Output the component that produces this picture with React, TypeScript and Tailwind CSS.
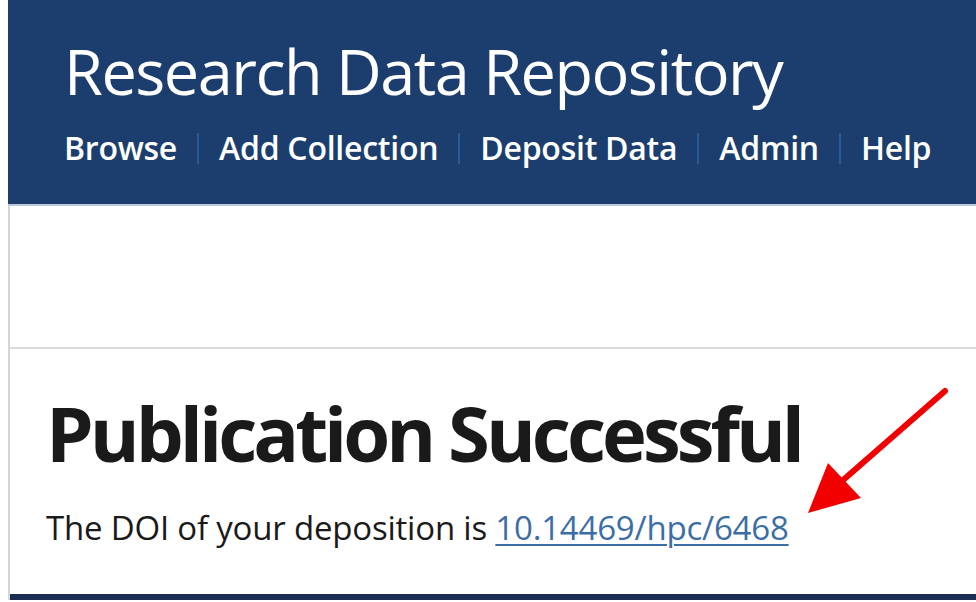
import React from 'react';

const navItems = ['Browse', 'Add Collection', 'Deposit Data', 'Admin', 'Help'];

const App = () => {
  return (
    <div
      className="relative min-h-screen w-[976px] h-[602px] overflow-hidden bg-white pl-2"
      style={{ fontFamily: '"Open Sans", "Noto Sans", sans-serif' }}
    >
      {/* site header */}
      <header className="h-[206px] bg-[#1b3e6f] border-b-2 border-[#bcc6d6] pl-[56px] pt-[39px]">
        <h1 className="text-[63px] leading-none font-normal text-white tracking-[-1.5px]">
          Research Data Repository
        </h1>
        <nav className="mt-[30px] flex items-center text-[32px] font-semibold text-white leading-none tracking-[-0.25px]">
          {navItems.map((item, i) => (
            <React.Fragment key={item}>
              {i > 0 && <span className="mx-[20px] h-[31px] w-[2px] bg-[#2b5a98]" />}
              <a href="#">{item}</a>
            </React.Fragment>
          ))}
        </nav>
      </header>

      <div className="border-l-2 border-[#d6d6d6] h-[394px] flex flex-col">
        <div className="h-[143px] border-b-2 border-[#dadada]" />

        <main className="flex-1 pl-[36px] pt-[46px]">
          <h2 className="text-[76px] leading-none font-bold text-[#1a1a1a] tracking-[-4px]">
            Publication Successful
          </h2>
          <p className="mt-[40px] text-[33px] leading-none text-[#1a1a1a] tracking-[-0.2px]">
            The DOI of your deposition is{' '}
            <a href="#" className="text-[#3b6ea6] underline underline-offset-[4px] decoration-2">
              10.14469/hpc/6468
            </a>
          </p>
        </main>

        <div className="h-[6px] bg-[#1c2f52]" />
      </div>

      {/* annotation arrow */}
      <svg className="absolute left-0 top-0 pointer-events-none" width="976" height="602">
        <line x1="945" y1="391" x2="842" y2="481" stroke="#f20000" strokeWidth="6" strokeLinecap="round" />
        <polygon points="808,513 828,463 861,498" fill="#f20000" />
      </svg>
    </div>
  );
};

export default App;
